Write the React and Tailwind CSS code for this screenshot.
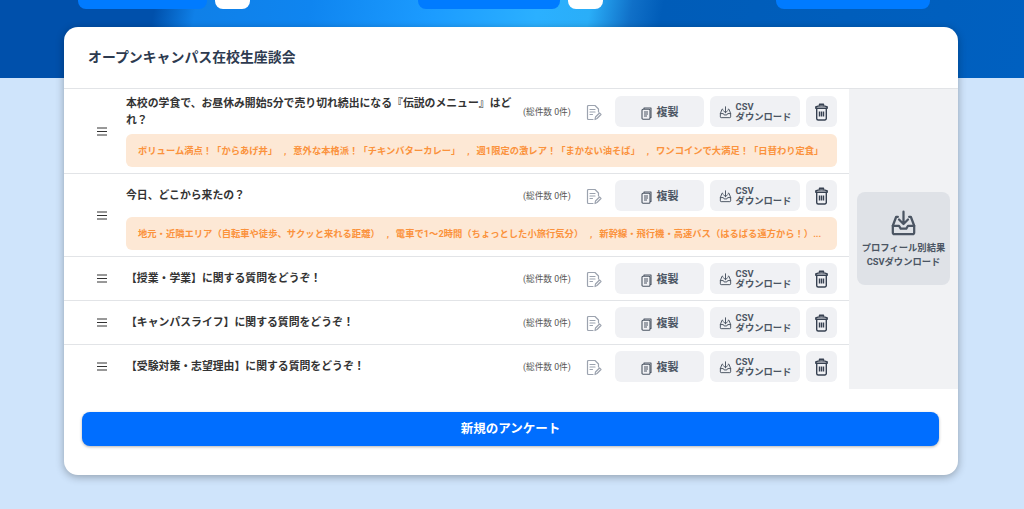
const rows = [
  {
    title: "本校の学食で、お昼休み開始5分で売り切れ続出になる『伝説のメニュー』はどれ？",
    options: "ボリューム満点！「からあげ丼」   ,   意外な本格派！「チキンバターカレー」   ,   週1限定の激レア！「まかない油そば」   ,   ワンコインで大満足！「日替わり定食」",
  },
  {
    title: "今日、どこから来たの？",
    options: "地元・近隣エリア（自転車や徒歩、サクッと来れる距離）   ,   電車で1〜2時間（ちょっとした小旅行気分）   ,   新幹線・飛行機・高速バス（はるばる遠方から！）...",
  },
  { title: "【授業・学業】に関する質問をどうぞ！" },
  { title: "【キャンパスライフ】に関する質問をどうぞ！" },
  { title: "【受験対策・志望理由】に関する質問をどうぞ！" },
];

const MenuIcon = () => (
  <svg width="12" height="9" viewBox="0 0 12 9" fill="none" stroke="#333" strokeWidth="1">
    <path d="M1 1h10M1 4.500h10M1 8h10" />
  </svg>
);

const NoteIcon = () => (
  <svg width="16" height="17" viewBox="0 0 16 17" fill="none" stroke="#9ca3af" strokeWidth="1.2" strokeLinecap="round" strokeLinejoin="round">
    <path d="M7 15.500H2.500a1 1 0 0 1-1-1v-12a1 1 0 0 1 1-1H9l3.500 3.500v3" />
    <path d="M4 5.500h5M4 8h5M4 10.500h2.500" />
    <path d="M9 15.500l.5-2.500 4-4 1.500 1.500-4 4z" />
  </svg>
);

const CopyIcon = () => (
  <svg width="11" height="13" viewBox="0 0 11 13" fill="none" stroke="#4b5563" strokeWidth="1.1" strokeLinejoin="round">
    <path d="M3 2V1h7v9.500H9" />
    <rect x="1" y="2.200" width="8" height="10" rx="1" />
    <path d="M3 5h4M3 7h4M3 9h3" />
  </svg>
);

const TrayIcon = ({ size = 13, width = 1.8 }) => (
  <svg width={size} height={size} viewBox="0 0 24 24" fill="none" stroke="#4b5563" strokeWidth={width} strokeLinecap="round" strokeLinejoin="round">
    <path d="M12 1.500v11M8 8.500l4 4 4-4" />
    <path d="M7 6H5.500L2.500 14v6a1.500 1.500 0 0 0 1.500 1.500h16a1.500 1.500 0 0 0 1.500-1.500v-6L18.500 6H17" />
    <path d="M2.500 14H8l1.500 2.500h5L16 14h5.500" />
  </svg>
);

const TrashIcon = () => (
  <svg width="13" height="18" viewBox="0 0 13 18" fill="none" stroke="#374151" strokeWidth="1.4" strokeLinejoin="round">
    <path d="M4.500 2.800V1.200h4v1.600" />
    <path d="M.8 3.800c2-1.200 9.400-1.200 11.400 0v1.400H.8z" />
    <path d="M1.700 5.200v10.300a1.500 1.500 0 0 0 1.500 1.500h6.600a1.500 1.500 0 0 0 1.500-1.500V5.200" />
    <path d="M4.500 8.500v5M6.500 8.500v5M8.500 8.500v5" />
  </svg>
);

const Row = ({ title, options }) => (
  <div className="flex items-center border-b border-[#e2e4e7] last:border-b-0 pr-3">
    <div className="w-[62px] shrink-0 flex justify-center pl-[14px]">
      <MenuIcon />
    </div>
    <div className="flex-1 min-w-0 py-[6px]">
      <div className="flex items-center">
        <p className="w-[390px] shrink-0 translate-y-px text-[10.85px] leading-[16.5px] font-bold text-[#333]">{title}</p>
        <span className="ml-[7px] w-[58px] translate-y-px text-[8.7px] text-[#555] whitespace-nowrap">(総件数 0件)</span>
        <span className="w-[26px] translate-y-px flex justify-center">
          <NoteIcon />
        </span>
        <button className="ml-[8px] w-[89px] h-[31px] pt-[3px] rounded-md bg-[#f0f1f4] flex items-center justify-center gap-[5px] text-[11px] font-bold text-[#4b5563]">
          <CopyIcon />
          複製
        </button>
        <button className="ml-[6px] w-[90px] h-[31px] pt-px rounded-md bg-[#f0f1f4] flex items-center justify-center gap-[4px] text-[9.3px] leading-[10px] font-bold text-[#4b5563] text-left">
          <TrayIcon />
          <span>
            CSV
            <br />
            ダウンロード
          </span>
        </button>
        <button className="ml-[6px] w-[31px] h-[31px] rounded-md bg-[#f0f1f4] flex items-center justify-center">
          <TrashIcon />
        </button>
      </div>
      {options && (
        <div className="mt-[6px] h-[33px] rounded-md bg-[#fde8d5] flex items-center px-3 text-[9.3px] font-bold text-[#fb923c]">
          <span className="whitespace-pre">{options}</span>
        </div>
      )}
    </div>
  </div>
);

export default function App() {
  return (
    <div className="min-h-[509px] bg-[#cfe4fb] font-['Roboto','Noto_Sans_CJK_JP',sans-serif] overflow-hidden">
      <div className="h-[78px] flex items-start bg-[linear-gradient(100deg,#0050ab_0%,#0050ab_15%,#0f80e8_19%,#0f85f0_30%,#1c9cff_42%,#2bb0ff_52%,#2aaef8_57%,#1070c8_61%,#005cb8_64%,#0060c0_100%)]">
        <div className="ml-[78px] w-[129px] h-[9px] rounded-b-lg bg-[#007bff]" />
        <div className="ml-[8px] w-[35px] h-[9px] rounded-b-lg bg-white" />
        <div className="ml-[168px] w-[142px] h-[9px] rounded-b-lg bg-[#007bff]" />
        <div className="ml-[8px] w-[35px] h-[9px] rounded-b-lg bg-white" />
        <div className="ml-[173px] w-[154px] h-[9px] rounded-b-lg bg-[#007bff]" />
      </div>
      <div className="-mt-[51px] mx-[64px] w-[894px] h-[448px] rounded-[14px] bg-white shadow-[0_2px_8px_rgba(0,0,0,0.3)] overflow-hidden relative">
        <div className="h-[62px] flex items-center pl-6 border-b border-[#e2e4e7]">
          <h1 className="text-[13.9px] font-bold text-[#2d3a4f]">オープンキャンパス在校生座談会</h1>
        </div>
        <div className="flex h-[300px]">
          <div className="w-[785px] shrink-0">
            {rows.map((r) => (
              <Row key={r.title} {...r} />
            ))}
          </div>
          <div className="flex-1 bg-[#f1f2f4] flex items-center justify-center pb-[2px]">
            <button className="w-[93px] h-[93px] pt-[3px] rounded-lg bg-[#dfe2e7] flex flex-col items-center justify-center text-[9.3px] leading-[14px] font-bold text-[#4b5563]">
              <TrayIcon size={27} width={2} />
              <span className="mt-[4px] whitespace-nowrap">プロフィール別結果</span>
              <span className="whitespace-nowrap">CSVダウンロード</span>
            </button>
          </div>
        </div>
        <div className="px-[18px] pt-[23px]">
          <button className="w-[857px] h-[34px] rounded-lg bg-[#006eff] shadow-[0_1px_3px_rgba(0,0,0,0.3)] text-[12.5px] font-bold text-white">
            新規のアンケート
          </button>
        </div>
      </div>
    </div>
  );
}
